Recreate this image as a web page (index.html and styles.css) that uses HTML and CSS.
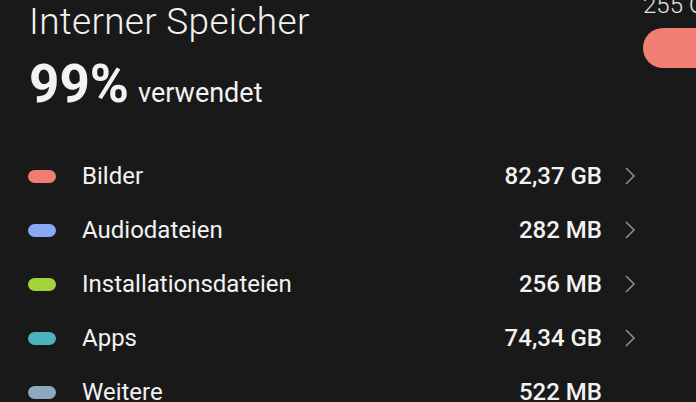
FILE: index.html
```html
<!doctype html>
<html lang="de">
    <head>
        <meta charset="UTF-8" />
        <title>Interner Speicher</title>
        <link rel="stylesheet" href="styles.css">
    </head>
    <body>
        <div class="storage-header">
            <div class="storage-summary">
                <h1 class="storage-title">Interner Speicher</h1>
                <div class="storage-usage">
                    <span class="usage-percent">99%</span>
                    <span class="usage-label">verwendet</span>
                </div>
            </div>
            <div class="storage-total">
                <span class="total-text">255 GB</span>
                <div class="total-bar"></div>
            </div>
        </div>

        <ul class="category-list">
            <li class="category-item">
                <span class="category-dot dot-images"></span>
                <span class="category-name">Bilder</span>
                <span class="category-size">82,37 GB</span>
                <span class="category-arrow">
                    <svg width="12" height="20" viewBox="0 0 12 20"><path d="M2 2l8 8-8 8" /></svg>
                </span>
            </li>
            <li class="category-item">
                <span class="category-dot dot-audio"></span>
                <span class="category-name">Audiodateien</span>
                <span class="category-size">282 MB</span>
                <span class="category-arrow">
                    <svg width="12" height="20" viewBox="0 0 12 20"><path d="M2 2l8 8-8 8" /></svg>
                </span>
            </li>
            <li class="category-item">
                <span class="category-dot dot-install"></span>
                <span class="category-name">Installationsdateien</span>
                <span class="category-size">256 MB</span>
                <span class="category-arrow">
                    <svg width="12" height="20" viewBox="0 0 12 20"><path d="M2 2l8 8-8 8" /></svg>
                </span>
            </li>
            <li class="category-item">
                <span class="category-dot dot-apps"></span>
                <span class="category-name">Apps</span>
                <span class="category-size">74,34 GB</span>
                <span class="category-arrow">
                    <svg width="12" height="20" viewBox="0 0 12 20"><path d="M2 2l8 8-8 8" /></svg>
                </span>
            </li>
            <li class="category-item">
                <span class="category-dot dot-other"></span>
                <span class="category-name">Weitere</span>
                <span class="category-size">522 MB</span>
                <span class="category-arrow"></span>
            </li>
        </ul>
    </body>
</html>
```

FILE: styles.css
```css
html,
body {
    margin: 0;
    height: 100%;
}
body {
    font-family: Roboto, "Liberation Sans", sans-serif;
    background-color: #191919;
    color: #f2f2f2;
    overflow: hidden;
}
.storage-header {
    display: flex;
    justify-content: space-between;
    padding-left: 29px;
    height: 149px;
}
.storage-title {
    margin: 0;
    font-size: 37px;
    font-weight: 300;
    line-height: 44px;
    letter-spacing: 0.3px;
}
.storage-usage {
    display: flex;
    align-items: baseline;
    margin-top: 12px;
}
.usage-percent {
    font-size: 53px;
    font-weight: 700;
    line-height: 56px;
}
.usage-label {
    font-size: 27px;
    margin-left: 9px;
}
.storage-total {
    width: 53px;
    margin-top: -9px;
    overflow: hidden;
    white-space: nowrap;
}
.total-text {
    display: block;
    font-size: 24px;
    line-height: 28px;
    font-weight: 300;
    color: #e6e6e6;
}
.total-bar {
    width: 80px;
    height: 40px;
    margin-top: 9px;
    border-radius: 20px;
    background-color: #f07e72;
}
.category-list {
    list-style: none;
    margin: 0;
    padding: 0 0 0 28px;
}
.category-item {
    display: flex;
    align-items: center;
    height: 54px;
}
.category-dot {
    width: 28px;
    height: 13px;
    border-radius: 7px;
    margin-right: 26px;
}
.dot-images {
    background-color: #f07c72;
}
.dot-audio {
    background-color: #87a9f6;
}
.dot-install {
    background-color: #a3d43c;
}
.dot-apps {
    background-color: #4bb3bd;
}
.dot-other {
    background-color: #8ea8bf;
}
.category-name {
    flex: 1;
    font-size: 24px;
}
.category-size {
    font-size: 24px;
    font-weight: 500;
}
.category-arrow {
    display: flex;
    width: 12px;
    margin-left: 22px;
    margin-right: 60px;
}
.category-arrow path {
    fill: none;
    stroke: #8c8c8c;
    stroke-width: 1.6;
}
```
